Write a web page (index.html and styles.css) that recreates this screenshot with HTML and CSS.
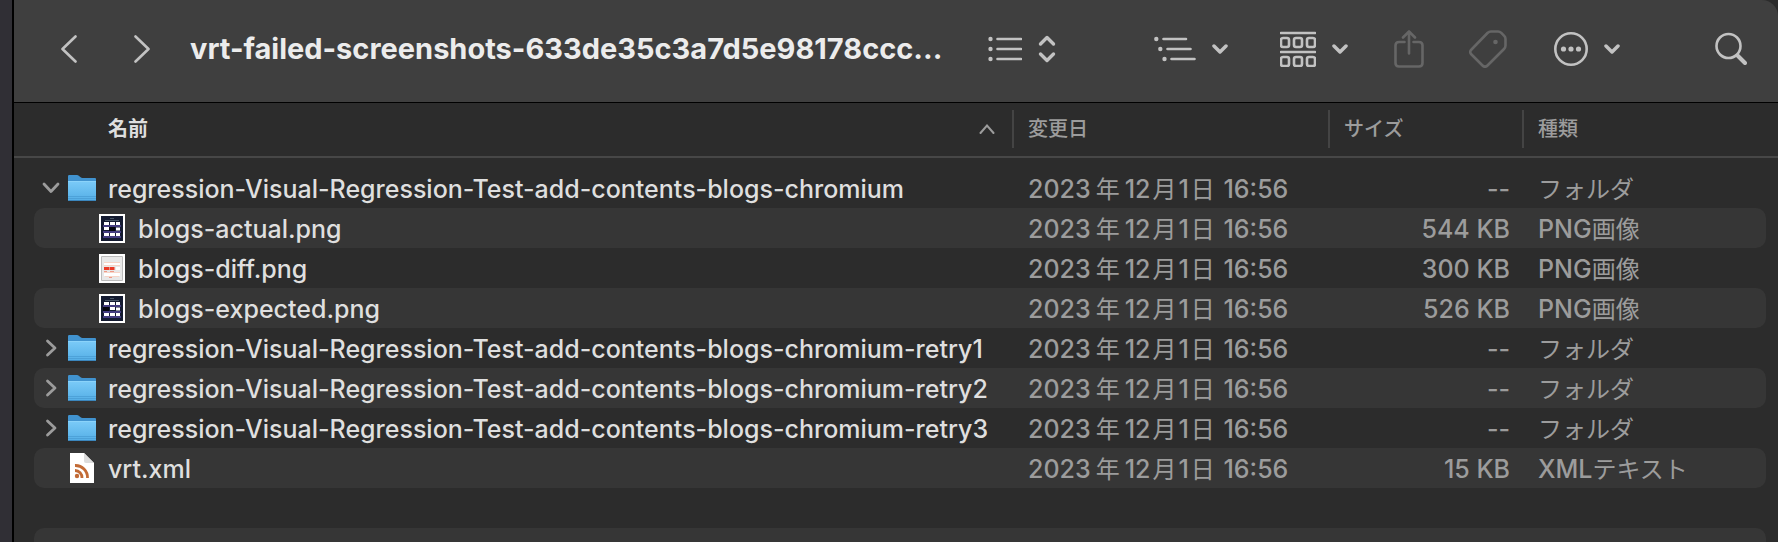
FILE: index.html
```html
<!DOCTYPE html>
<html lang="ja">
<head>
<meta charset="utf-8">
<title>vrt-failed-screenshots</title>
<link rel="stylesheet" href="styles.css">
</head>
<body>
<svg class="defs" aria-hidden="true">
  <defs>
    <linearGradient id="folder-front" x1="0" y1="0" x2="0" y2="1">
      <stop offset="0" stop-color="#7bcbf8"/><stop offset="1" stop-color="#54aee6"/>
    </linearGradient>
    <symbol id="folder" viewBox="0 0 28 28">
      <path d="M0 2.2Q0 1 1.2 1H9q1 0 1.8.7L12.600 3.200q.8.700 1.800.700H27q1 0 1 1V12H0z" fill="#4193cf"/>
      <path d="M0 7H28V26q0 1-1 1H1q-1 0-1-1z" fill="url(#folder-front)"/>
      <path d="M0 7.500H28" stroke="#8bd3fa"/>
      <path d="M0 22.500H28M0 24.500H28" stroke="#479bd2" opacity=".7"/>
      <path d="M.5 26.500H27.500" stroke="#3b86bd"/>
    </symbol>
    <symbol id="down" viewBox="0 0 16 10"><path d="M2 2l6 6 6-6" fill="none" stroke="currentColor" stroke-width="3.500" stroke-linecap="round" stroke-linejoin="round"/></symbol>
    <symbol id="closed" viewBox="0 0 12 18"><path d="M2.500 2l7.500 7L2.500 16" fill="none" stroke="currentColor" stroke-width="2.800" stroke-linecap="round" stroke-linejoin="round"/></symbol>
    <symbol id="open" viewBox="0 0 18 12"><path d="M2 2l7 7.500L16 2" fill="none" stroke="currentColor" stroke-width="2.800" stroke-linecap="round" stroke-linejoin="round"/></symbol>
    <symbol id="page-dark" viewBox="0 0 26 29">
      <path fill="#fff" d="M0 0h26v29H0z"/><path fill="#141b31" d="M2 2h22v25H2z"/>
      <path stroke="#4b5868" d="M11 4.500h4M6 6.500h14"/>
      <path fill="#433c80" d="M4 11h18v2H4zM4 17h18v2H4zM4 22h18v2H4z"/>
      <path fill="#fff" d="M5 8h5v3H5zM11 8h5v3h-5zM17 8h4v3h-4zM5 19h5v3H5zM11 19h5v3h-5zM17 19h4v3h-4zM17 13.500h4v3h-4z"/>
    </symbol>
  </defs>
</svg>
<div class="window">
  <header class="toolbar">
    <nav class="history">
      <button class="tool" aria-label="戻る"><svg width="16" height="28" viewBox="0 0 16 28"><path d="M14.500 1.500L1.500 14l13 12.500"/></svg></button>
      <button class="tool" aria-label="進む"><svg width="16" height="28" viewBox="0 0 16 28"><path d="M1.500 1.500L14.500 14l-13 12.500"/></svg></button>
    </nav>
    <h1 class="title">vrt-failed-screenshots-633de35c3a7d5e98178ccc...</h1>
    <button class="tool view" aria-label="リスト表示">
      <svg width="34" height="26" viewBox="0 0 34 26"><path d="M9.500 3H33M9.500 13H33M9.500 23H33"/><g class="solid"><circle cx="2.500" cy="3" r="2.200"/><circle cx="2.500" cy="13" r="2.200"/><circle cx="2.500" cy="23" r="2.200"/></g></svg>
      <svg width="18" height="28" viewBox="0 0 18 28"><path class="thick" d="M2.500 9L9 2.500 15.500 9M2.500 19L9 25.500 15.500 19"/></svg>
    </button>
    <div class="actions">
      <button class="tool menu" aria-label="アウトライン">
        <svg width="42" height="26" viewBox="0 0 42 26"><path d="M9.500 3H32M13.500 13H36.500M17.500 23H40.500"/><g class="solid"><circle cx="2.300" cy="3" r="2.200"/><circle cx="6.300" cy="13" r="2.200"/><circle cx="10.500" cy="23" r="2.200"/></g></svg>
        <svg width="16" height="10"><use href="#down"/></svg>
      </button>
      <button class="tool menu" aria-label="グループ">
        <svg width="36" height="36" viewBox="0 0 36 36"><path d="M1 2H35M1 21H35"/><g class="outline"><rect x="1" y="7" width="8" height="9" rx="2"/><rect x="14" y="7" width="8" height="9" rx="2"/><rect x="27" y="7" width="8" height="9" rx="2"/><rect x="1" y="26" width="8" height="9" rx="2"/><rect x="14" y="26" width="8" height="9" rx="2"/><rect x="27" y="26" width="8" height="9" rx="2"/></g></svg>
        <svg width="16" height="10"><use href="#down"/></svg>
      </button>
      <button class="tool share" disabled aria-label="共有">
        <svg width="30" height="38" viewBox="0 0 30 38"><path d="M10.500 12H5Q1.500 12 1.500 15.500V33Q1.500 36.500 5 36.500H25Q28.500 36.500 28.500 33V15.500Q28.500 12 25 12H19.500M15 23.500V2M9 7.500L15 1.500l6 6"/></svg>
      </button>
      <button class="tool tag" disabled aria-label="タグ">
        <svg width="38" height="38" viewBox="0 0 38 38"><path d="M22 1.500H29Q31 1.500 32.300 2.800L35.200 5.800Q36.500 7.100 36.500 9V15.500Q36.500 17.500 35 19L18.500 35.500Q16 38 13.500 35.500L2.500 24.500Q0 22 2.500 19.500L18.500 3Q20 1.500 22 1.500z"/><circle class="solid" cx="26.500" cy="12" r="2.300"/></svg>
      </button>
      <button class="tool menu more" aria-label="その他">
        <svg width="34" height="34" viewBox="0 0 34 34"><circle cx="17" cy="17" r="15.700"/><g class="solid"><circle cx="9.500" cy="17" r="2.600"/><circle cx="17" cy="17" r="2.600"/><circle cx="24.500" cy="17" r="2.600"/></g></svg>
        <svg width="16" height="10"><use href="#down"/></svg>
      </button>
      <button class="tool search" aria-label="検索">
        <svg width="32" height="34" viewBox="0 0 32 34"><circle cx="13.500" cy="14" r="12"/><path class="handle" d="M22.500 23.500L30 31"/></svg>
      </button>
    </div>
  </header>
  <table class="files">
    <thead>
      <tr>
        <th class="name sorted" scope="col">名前<svg width="16" height="10" viewBox="0 0 16 10"><path d="M1.500 9L8 1.500 14.500 9"/></svg></th>
        <th scope="col">変更日</th>
        <th scope="col">サイズ</th>
        <th scope="col">種類</th>
      </tr>
    </thead>
    <tbody>
      <tr><td class="name"><button class="twist" aria-label="閉じる"><svg width="18" height="12"><use href="#open"/></svg></button><svg class="icon" width="28" height="28"><use href="#folder"/></svg>regression-Visual-Regression-Test-add-contents-blogs-chromium</td><td class="date">2023<span class="cjk year">年</span>12<span class="cjk">月</span>1<span class="cjk">日</span> 16:56</td><td class="size">--</td><td class="kind"><span class="cjk">フォルダ</span></td></tr>
      <tr><td class="name child"><svg class="icon" width="26" height="29"><use href="#page-dark"/><path fill="#fff" d="M5 13h5v3H5z"/><path fill="#04050d" d="M10 13h6v4h-6z"/></svg>blogs-actual.png</td><td class="date">2023<span class="cjk year">年</span>12<span class="cjk">月</span>1<span class="cjk">日</span> 16:56</td><td class="size">544 KB</td><td class="kind">PNG<span class="cjk">画像</span></td></tr>
      <tr><td class="name child"><svg class="icon" width="26" height="29" viewBox="0 0 26 29"><path fill="#fff" d="M0 0h26v29H0z"/><path fill="#e8e8e8" stroke="#bcbcbc" d="M2.500 2.500h21v24h-21z"/><path fill="#f7d5c8" d="M5 8h16v2H5zM5 11h16v1H5zM5 18h16v1H5zM6 22h14v1H6z"/><path fill="#fff" d="M5 9h16v2H5zM5 19h16v3H5zM17 13h4v3h-4z"/><path fill="#ea3b28" d="M5 13h5v3H5zM10.500 13h5v3h-5z"/><path fill="#ee9a88" d="M5 17h3v1H5zM11 17h4v1h-4zM10 23h3v1h-3z"/></svg>blogs-diff.png</td><td class="date">2023<span class="cjk year">年</span>12<span class="cjk">月</span>1<span class="cjk">日</span> 16:56</td><td class="size">300 KB</td><td class="kind">PNG<span class="cjk">画像</span></td></tr>
      <tr><td class="name child"><svg class="icon" width="26" height="29"><use href="#page-dark"/><path fill="#fff" d="M11 13h5v3h-5z"/><path fill="#04050d" d="M4 13h6v4H4z"/></svg>blogs-expected.png</td><td class="date">2023<span class="cjk year">年</span>12<span class="cjk">月</span>1<span class="cjk">日</span> 16:56</td><td class="size">526 KB</td><td class="kind">PNG<span class="cjk">画像</span></td></tr>
      <tr><td class="name"><button class="twist" aria-label="開く"><svg width="12" height="18"><use href="#closed"/></svg></button><svg class="icon" width="28" height="28"><use href="#folder"/></svg>regression-Visual-Regression-Test-add-contents-blogs-chromium-retry1</td><td class="date">2023<span class="cjk year">年</span>12<span class="cjk">月</span>1<span class="cjk">日</span> 16:56</td><td class="size">--</td><td class="kind"><span class="cjk">フォルダ</span></td></tr>
      <tr><td class="name"><button class="twist" aria-label="開く"><svg width="12" height="18"><use href="#closed"/></svg></button><svg class="icon" width="28" height="28"><use href="#folder"/></svg>regression-Visual-Regression-Test-add-contents-blogs-chromium-retry2</td><td class="date">2023<span class="cjk year">年</span>12<span class="cjk">月</span>1<span class="cjk">日</span> 16:56</td><td class="size">--</td><td class="kind"><span class="cjk">フォルダ</span></td></tr>
      <tr><td class="name"><button class="twist" aria-label="開く"><svg width="12" height="18"><use href="#closed"/></svg></button><svg class="icon" width="28" height="28"><use href="#folder"/></svg>regression-Visual-Regression-Test-add-contents-blogs-chromium-retry3</td><td class="date">2023<span class="cjk year">年</span>12<span class="cjk">月</span>1<span class="cjk">日</span> 16:56</td><td class="size">--</td><td class="kind"><span class="cjk">フォルダ</span></td></tr>
      <tr><td class="name leaf"><svg class="icon" width="24" height="30" viewBox="0 0 24 30"><path d="M0 0H14L24 10V30H0z" fill="#fff"/><path d="M14 0V8q0 2 2 2h8z" fill="#dcdcdc"/><circle cx="7" cy="23" r="2.200" fill="#c26a35"/><path d="M5 17.500a7 7 0 0 1 7 7.500M5 12.500a12 12 0 0 1 12.500 12.500" fill="none" stroke="#c26a35" stroke-width="2.800"/></svg>vrt.xml</td><td class="date">2023<span class="cjk year">年</span>12<span class="cjk">月</span>1<span class="cjk">日</span> 16:56</td><td class="size">15 KB</td><td class="kind">XML<span class="cjk">テキスト</span></td></tr>
      <tr class="blank"><td></td></tr>
      <tr class="blank"><td></td></tr>
    </tbody>
  </table>
</div>
</body>
</html>
```
FILE: styles.css
```css
* { box-sizing: border-box; }

body {
  margin: 0;
  height: 100vh;
  overflow: hidden;
  padding-left: 12px;
  background: #302f35;
  font-family: Inter, "Noto Sans CJK JP", sans-serif;
}

.defs { position: absolute; width: 0; height: 0; }

.window {
  min-height: 100vh;
  border-left: 2px solid #000;
  background: #2c2c2c;
}

.toolbar {
  display: flex;
  align-items: center;
  height: 103px;
  padding: 0 31px 5px 47px;
  background: #3f3f3f;
  border-bottom: 1px solid #000;
  border-top-right-radius: 16px;
}

.tool {
  display: flex;
  align-items: center;
  padding: 0;
  border: 0;
  background: none;
  color: #c2c2c2;
}

.tool:disabled { color: #666; }

.tool svg { fill: none; stroke: currentColor; stroke-width: 2.6; stroke-linecap: round; stroke-linejoin: round; }
.tool .solid { fill: currentColor; stroke: none; }
.tool .thick { stroke-width: 3.4; }
.tool .handle { stroke-width: 4; }

.history { display: flex; gap: 57px; }

.title {
  margin: 0 46px 0 40px;
  color: #ececec;
  font-size: 29px;
  font-weight: 700;
  line-height: 36px;
  white-space: nowrap;
}

.view { gap: 16px; }
.actions { display: flex; align-items: center; margin-left: auto; }
.menu { gap: 16px; margin-right: 52px; }
.share { margin: 0 45px 0 -6px; }
.tag { margin-right: 47px; }
.more { margin-right: 95px; }

.files, .files thead, .files tbody { display: block; }
.files tr { display: grid; grid-template-columns: 1fr 316px 194px 244px; }

.files thead {
  padding: 7px 12px 8px 20px;
  border-bottom: 2px solid #474747;
}

.files th {
  display: flex;
  align-items: center;
  height: 38px;
  padding: 0 0 0 14px;
  border-left: 2px solid #444;
  color: #9c9c9c;
  font-size: 20px;
  font-weight: 500;
  line-height: 36px;
}

.files th.sorted {
  justify-content: space-between;
  padding: 0 17px 0 74px;
  border: 0;
  color: #dedede;
  font-weight: 700;
}

.sorted svg { fill: none; stroke: #9c9c9c; stroke-width: 2; stroke-linecap: round; }

.files tbody { padding: 10px 12px 0 20px; }

.files tbody tr { height: 40px; border-radius: 10px; }
.files tbody tr:nth-child(even) { background: #363636; }

.files td {
  height: 40px;
  padding: 1px 0 0 16px;
  color: #9c9c9c;
  font-size: 25px;
  font-weight: 500;
  line-height: 40px;
  white-space: nowrap;
}

.files td.name {
  display: flex;
  align-items: center;
  padding: 2px 0 0;
  color: #dfdfdf;
}

.files td.child { padding-left: 65px; }
.files td.leaf { padding-left: 36px; }
.files td.size { padding: 1px 12px 0 0; text-align: right; }

.icon { flex: none; margin: 0 12px 2px 0; }
.child .icon { margin-right: 13px; }
.leaf .icon { margin-right: 14px; }

.twist {
  display: flex;
  align-items: center;
  justify-content: center;
  width: 34px;
  height: 38px;
  padding: 0 0 2px;
  border: 0;
  background: none;
  color: #9c9c9c;
}

.cjk { font-size: 24px; font-weight: 400; line-height: 24px; }
.date .cjk { margin: 0 2px; }
.date .year { margin: 0 5px; }
.kind .cjk:not(:first-child) { margin-left: 5px; }
```
